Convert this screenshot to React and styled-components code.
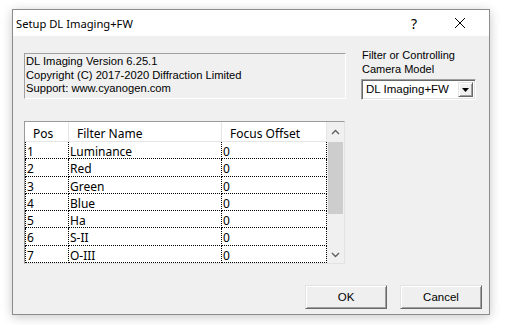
import React from "react";
import styled, { createGlobalStyle } from "styled-components";

const Global = createGlobalStyle`
  html, body { margin: 0; padding: 0; background: #ffffff; }
  body { width: 507px; height: 325px; overflow: hidden; }
  * { box-sizing: border-box; }
`;

const Page = styled.div`
  padding: 9px 0 0 12px;
`;

const Window = styled.div`
  width: 478px;
  height: 306px;
  border: 1px solid #8c8c8c;
  background: #f0f0f0;
  box-shadow: 0 2px 10px rgba(0, 0, 0, 0.22);
  display: flex;
  flex-direction: column;
`;

const TitleBar = styled.div`
  height: 26px;
  background: #ffffff;
  display: flex;
  align-items: center;
  padding: 0 6px 0 3px;
  font-family: "Noto Sans", sans-serif;
  font-size: 11.2px;
  color: #000;
`;

const Title = styled.div`
  flex: 1;
  padding-top: 1px;
`;

const TitleBtn = styled.div`
  width: 46px;
  height: 26px;
  display: flex;
  align-items: center;
  justify-content: center;
  font-size: 14px;
`;

const Body = styled.div`
  flex: 1;
  padding: 13px 13px 0 11px;
  display: flex;
  flex-direction: column;
`;

const TopRow = styled.div`
  display: flex;
  align-items: flex-start;
`;

const InfoBox = styled.div`
  margin-top: 4px;
  width: 322px;
  height: 46px;
  border-top: 1px solid #a0a0a0;
  border-left: 1px solid #a0a0a0;
  border-right: 1px solid #ffffff;
  border-bottom: 1px solid #ffffff;
  padding: 1px 0 0 1px;
  font-family: "Liberation Sans", Arial, sans-serif;
  font-size: 11.2px;
  line-height: 13.5px;
  color: #000;
`;

const RightCol = styled.div`
  margin-left: 15px;
  width: 115px;
  display: flex;
  flex-direction: column;
`;

const Label = styled.div`
  padding-left: 1px;
  font-family: "Liberation Sans", Arial, sans-serif;
  font-size: 11px;
  line-height: 13.5px;
  color: #000;
`;

const Combo = styled.div`
  margin-top: 3px;
  height: 21px;
  display: flex;
  align-items: stretch;
  background: #fff;
  border-top: 1px solid #a0a0a0;
  border-left: 1px solid #a0a0a0;
  border-right: 1px solid #fff;
  border-bottom: 1px solid #fff;
  box-shadow: inset 1px 1px 0 #696969, inset -1px -1px 0 #e3e3e3;
  padding: 2px;
`;

const ComboText = styled.div`
  flex: 1;
  padding-left: 2px;
  font-family: "Liberation Sans", Arial, sans-serif;
  font-size: 11.5px;
  line-height: 15px;
  color: #000;
`;

const ComboBtn = styled.div`
  width: 15px;
  background: #f0f0f0;
  border-top: 1px solid #e3e3e3;
  border-left: 1px solid #e3e3e3;
  border-right: 1px solid #696969;
  border-bottom: 1px solid #696969;
  box-shadow: inset 1px 1px 0 #fff, inset -1px -1px 0 #a0a0a0;
  display: flex;
  align-items: center;
  justify-content: center;
`;

const TableFrame = styled.div`
  margin-top: 21px;
  width: 321px;
  height: 143px;
  border-top: 1px solid #9a9a9a;
  border-left: 1px solid #9a9a9a;
  border-right: 1px solid #e3e3e3;
  border-bottom: 1px solid #e3e3e3;
  display: flex;
  overflow: hidden;
  background: #fff;
`;

const Grid = styled.div`
  width: 302px;
  display: grid;
  grid-template-columns: 44px 153px 105px;
  grid-auto-rows: 17.25px;
  grid-template-rows: 20px;
  align-content: start;
  font-family: "Noto Sans", sans-serif;
  font-size: 12px;
  color: #000;
`;

const HeadCell = styled.div`
  height: 20px;
  border-right: 1px solid #e5e5e5;
  border-bottom: 1px solid #e5e5e5;
  padding: 3px 0 0 ${(p) => p.$pad}px;
  line-height: 17px;
  white-space: nowrap;
  overflow: hidden;
`;

const Cell = styled.div`
  height: 17.25px;
  border-bottom: 1px dotted #000;
  border-right: 1px dotted #000;
  border-left: ${(p) => (p.$first ? "1px dotted #000" : "none")};
  padding: 2px 0 0 1px;
  line-height: 15px;
  white-space: nowrap;
`;

const ScrollBar = styled.div`
  width: 17px;
  background: #f0f0f0;
  display: flex;
  flex-direction: column;
`;

const ScrollArrow = styled.div`
  height: ${(p) => p.$h}px;
  display: flex;
  align-items: center;
  justify-content: center;
`;

const Thumb = styled.div`
  height: 72px;
  margin: 0 1px;
  background: #cdcdcd;
`;

const Track = styled.div`
  flex: 1;
`;

const ButtonRow = styled.div`
  margin-top: 21px;
  display: flex;
  justify-content: flex-end;
  gap: 13px;
  margin-right: -6px;
`;

const Button = styled.div`
  width: 82px;
  height: 24px;
  background: #efefef;
  border-top: 1px solid #e3e3e3;
  border-left: 1px solid #e3e3e3;
  border-right: 1px solid #696969;
  border-bottom: 1px solid #696969;
  box-shadow: inset 1px 1px 0 #fff, inset -1px -1px 0 #a0a0a0;
  display: flex;
  align-items: center;
  justify-content: center;
  font-family: "Liberation Sans", Arial, sans-serif;
  font-size: 11.5px;
  color: #000;
`;

const rows = [
  ["1", "Luminance", "0"],
  ["2", "Red", "0"],
  ["3", "Green", "0"],
  ["4", "Blue", "0"],
  ["5", "Ha", "0"],
  ["6", "S-II", "0"],
  ["7", "O-III", "0"],
  ["", "", ""],
];

export default function App() {
  return (
    <>
      <Global />
      <Page>
        <Window>
          <TitleBar>
            <Title>Setup DL Imaging+FW</Title>
            <TitleBtn>?</TitleBtn>
            <TitleBtn>
              <svg width="12" height="12" viewBox="0 0 12 12">
                <path d="M1 1L11 11M11 1L1 11" stroke="#000" strokeWidth="1" fill="none" />
              </svg>
            </TitleBtn>
          </TitleBar>
          <Body>
            <TopRow>
              <InfoBox>
                <div>DL Imaging Version 6.25.1</div>
                <div>Copyright (C) 2017-2020 Diffraction Limited</div>
                <div>Support: www.cyanogen.com</div>
              </InfoBox>
              <RightCol>
                <Label>
                  Filter or Controlling
                  <br />
                  Camera Model
                </Label>
                <Combo>
                  <ComboText>DL Imaging+FW</ComboText>
                  <ComboBtn>
                    <svg width="7" height="4" viewBox="0 0 7 4">
                      <path d="M0 0H7L3.5 4Z" fill="#000" />
                    </svg>
                  </ComboBtn>
                </Combo>
              </RightCol>
            </TopRow>
            <TableFrame>
              <Grid>
                <HeadCell $pad={8}>Pos</HeadCell>
                <HeadCell $pad={8}>Filter Name</HeadCell>
                <HeadCell $pad={8}>Focus Offset</HeadCell>
                {rows.map((r, i) => (
                  <React.Fragment key={i}>
                    <Cell $first>{r[0]}</Cell>
                    <Cell>{r[1]}</Cell>
                    <Cell>{r[2]}</Cell>
                  </React.Fragment>
                ))}
              </Grid>
              <ScrollBar>
                <ScrollArrow $h={20}>
                  <svg width="9" height="6" viewBox="0 0 9 6">
                    <path d="M1 5L4.5 1.5L8 5" stroke="#606060" strokeWidth="1.4" fill="none" />
                  </svg>
                </ScrollArrow>
                <Thumb />
                <Track />
                <ScrollArrow $h={17}>
                  <svg width="9" height="6" viewBox="0 0 9 6">
                    <path d="M1 1L4.5 4.5L8 1" stroke="#606060" strokeWidth="1.4" fill="none" />
                  </svg>
                </ScrollArrow>
              </ScrollBar>
            </TableFrame>
            <ButtonRow>
              <Button>OK</Button>
              <Button>Cancel</Button>
            </ButtonRow>
          </Body>
        </Window>
      </Page>
    </>
  );
}
